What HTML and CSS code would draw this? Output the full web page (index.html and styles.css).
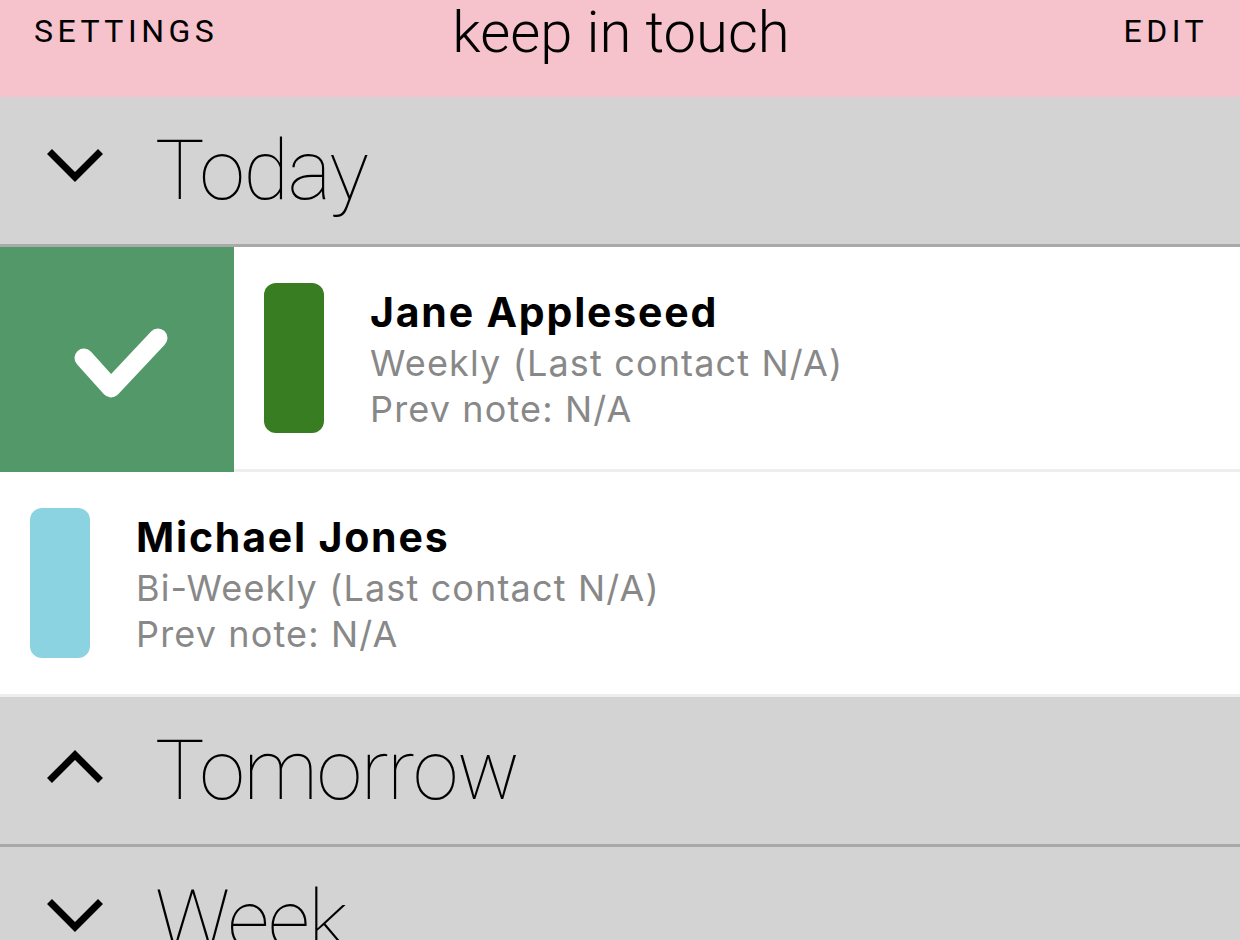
FILE: index.html
```html
<!DOCTYPE html>
<html lang="en">
<head>
<meta charset="utf-8">
<title>keep in touch</title>
<link rel="stylesheet" href="styles.css">
</head>
<body>
<div class="app">
  <header class="topbar">
    <div class="nav-btn nav-left">SETTINGS</div>
    <div class="title">keep in touch</div>
    <div class="nav-btn nav-right">EDIT</div>
  </header>

  <section class="group">
    <div class="group-head">
      <svg class="chev" viewBox="0 0 56 34" width="56" height="34"><polyline points="2.5,2.5 28,28 53.5,2.5" fill="none" stroke="#000" stroke-width="7" stroke-linejoin="miter"/></svg>
      <span class="group-title">Today</span>
    </div>

    <div class="row swiped">
      <div class="done-action">
        <svg viewBox="0 0 120 100" width="120" height="100"><polyline points="24,47 51,77 98,27" fill="none" stroke="#fff" stroke-width="19" stroke-linecap="round" stroke-linejoin="round"/></svg>
      </div>
      <div class="row-content">
        <div class="tag tag-green"></div>
        <div class="info">
          <div class="name">Jane Appleseed</div>
          <div class="sub">Weekly (Last contact N/A)</div>
          <div class="sub">Prev note: N/A</div>
        </div>
      </div>
    </div>

    <div class="row">
      <div class="row-content">
        <div class="tag tag-blue"></div>
        <div class="info">
          <div class="name">Michael Jones</div>
          <div class="sub">Bi-Weekly (Last contact N/A)</div>
          <div class="sub">Prev note: N/A</div>
        </div>
      </div>
    </div>
  </section>

  <section class="group">
    <div class="group-head">
      <svg class="chev" viewBox="0 0 56 34" width="56" height="34"><polyline points="2.5,31.5 28,6 53.5,31.5" fill="none" stroke="#000" stroke-width="7" stroke-linejoin="miter"/></svg>
      <span class="group-title">Tomorrow</span>
    </div>
  </section>

  <section class="group">
    <div class="group-head">
      <svg class="chev" viewBox="0 0 56 34" width="56" height="34"><polyline points="2.5,2.5 28,28 53.5,2.5" fill="none" stroke="#000" stroke-width="7" stroke-linejoin="miter"/></svg>
      <span class="group-title">Week</span>
    </div>
  </section>
</div>
</body>
</html>
```

FILE: styles.css
```css
html, body {
  margin: 0;
  padding: 0;
  background: #fff;
}
body {
  width: 1240px;
  height: 940px;
  overflow: hidden;
  font-family: Roboto, "Liberation Sans", sans-serif;
  color: #000;
}
.app {
  display: flex;
  flex-direction: column;
}
.topbar {
  height: 97px;
  background: #f6c2cb;
  display: grid;
  grid-template-columns: 1fr auto 1fr;
  align-items: start;
  padding: 0 32px 0 34px;
  box-sizing: border-box;
}
.nav-btn {
  font-size: 32px;
  font-weight: 400;
  letter-spacing: 4.5px;
  margin-top: 13px;
  line-height: 37px;
}
.nav-right {
  justify-self: end;
}
.title {
  font-size: 58px;
  font-weight: 300;
  line-height: 64px;
}
.group-head {
  height: 147px;
  background: #d3d3d3;
  border-bottom: 3px solid #a9a9a9;
  display: flex;
  align-items: center;
  padding-left: 47px;
}
.chev {
  display: block;
  margin-bottom: 9px;
  margin-right: 52px;
}
.group-title {
  font-size: 83px;
  font-weight: 100;
  letter-spacing: -1.4px;
  line-height: 98px;
}
.row {
  display: flex;
  height: 225px;
  overflow: hidden;
}
.done-action {
  width: 234px;
  flex: none;
  background: #529869;
  display: flex;
  align-items: center;
  justify-content: center;
}
.done-action svg {
  display: block;
  margin-top: 2px;
  margin-left: 6px;
}
.row-content {
  flex: 1;
  display: flex;
  align-items: center;
  background: #fff;
  border-bottom: 3px solid #eeeeee;
  padding-left: 30px;
}
.tag {
  width: 60px;
  height: 150px;
  border-radius: 12px;
  flex: none;
  margin-right: 46px;
}
.tag-green {
  background: #387d22;
}
.tag-blue {
  background: #8bd3e1;
}
.info {
  font-family: Inter, Roboto, sans-serif;
  white-space: nowrap;
}
.name {
  font-size: 41px;
  font-weight: 700;
  letter-spacing: 1.8px;
  line-height: 55px;
}
.sub {
  font-size: 36px;
  font-weight: 400;
  letter-spacing: 1.15px;
  color: #888888;
  line-height: 46px;
}
```
